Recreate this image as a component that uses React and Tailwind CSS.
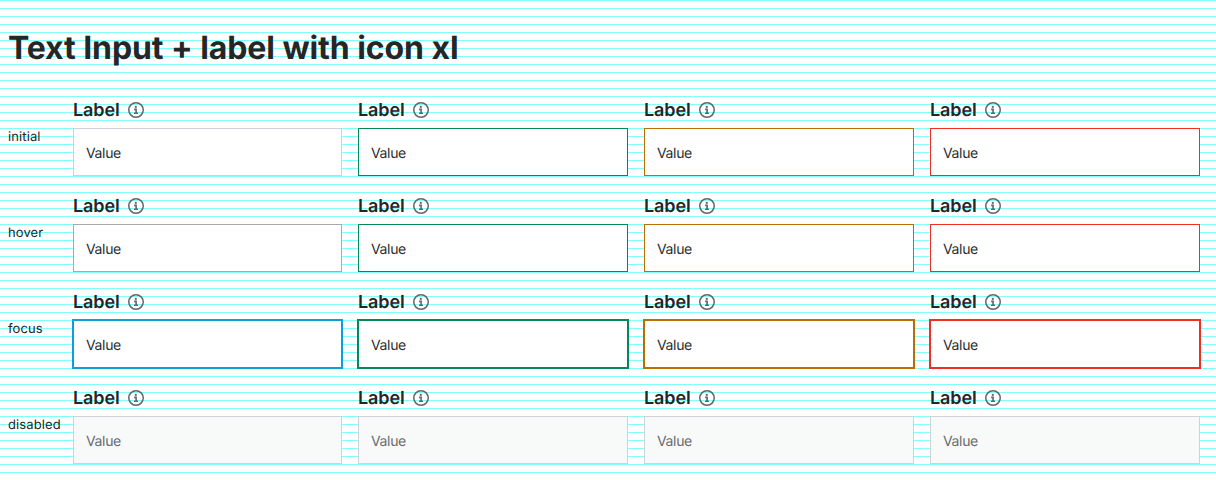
const columns = ['default', 'success', 'warning', 'error'];

const borders = {
  initial: ['border-[#d0d0d8]', 'border-[#008a5a]', 'border-[#b86e00]', 'border-[#ee3024]'],
  hover: ['border-[#a9a9ad]', 'border-[#008a5a]', 'border-[#b86e00]', 'border-[#ee3024]'],
  focus: [
    'border-[#0ca0d9] outline outline-[#0ca0d9]',
    'border-[#008a5a] outline outline-[#008a5a]',
    'border-[#b86e00] outline outline-[#b86e00]',
    'border-[#ee3024] outline outline-[#ee3024]',
  ],
  disabled: ['border-[#cfd2d6]', 'border-[#cfd2d6]', 'border-[#cfd2d6]', 'border-[#cfd2d6]'],
};

function InfoIcon() {
  return (
    <svg className="size-4 shrink-0" viewBox="0 0 16 16" fill="none" aria-hidden="true">
      <circle cx="8" cy="8" r="7.25" stroke="#62666a" strokeWidth="1.5" />
      <circle cx="7.8" cy="4.9" r="1.1" fill="#62666a" />
      <path d="M6.1 7.4H8.1V11M6 11.2H10" stroke="#62666a" strokeWidth="1.6" />
    </svg>
  );
}

function Field({ border, disabled }) {
  return (
    <div className="flex min-w-0 flex-col">
      <div className="flex h-8 items-center pb-1">
        <span className="w-[55px] pt-0.5 text-lg leading-7 font-semibold tracking-[-0.1px]">Label</span>
        <InfoIcon />
      </div>
      <div
        className={`flex h-12 items-center border px-3 text-sm tracking-[-0.35px] ${border} ${
          disabled ? 'bg-[#f8faf9] text-[#6a6c6f]' : 'bg-white text-[#2c2e30]'
        }`}
      >
        <span className="pt-[3px]">Value</span>
      </div>
    </div>
  );
}

export default function App() {
  return (
    <main className="h-[480px] overflow-hidden bg-white bg-[linear-gradient(to_bottom,#80ffff_1px,transparent_1px)] bg-[length:100%_8px] pr-4 pl-2 font-['Inter',sans-serif] text-[#242628] [text-rendering:geometricPrecision]">
      <h1 className="flex h-24 items-center text-[32px] leading-10 font-bold tracking-[-0.08px]">
        Text Input + label with icon xl
      </h1>
      <div className="grid grid-cols-[49px_269px_repeat(3,minmax(0,1fr))] gap-x-4 gap-y-4">
        {Object.entries(borders).map(([state, styles]) => (
          <div key={state} className="contents">
            <div className="pt-[31px] text-[13px] leading-5 tracking-[0.1px]">{state}</div>
            {columns.map((column, i) => (
              <Field key={column} border={styles[i]} disabled={state === 'disabled'} />
            ))}
          </div>
        ))}
      </div>
    </main>
  );
}
